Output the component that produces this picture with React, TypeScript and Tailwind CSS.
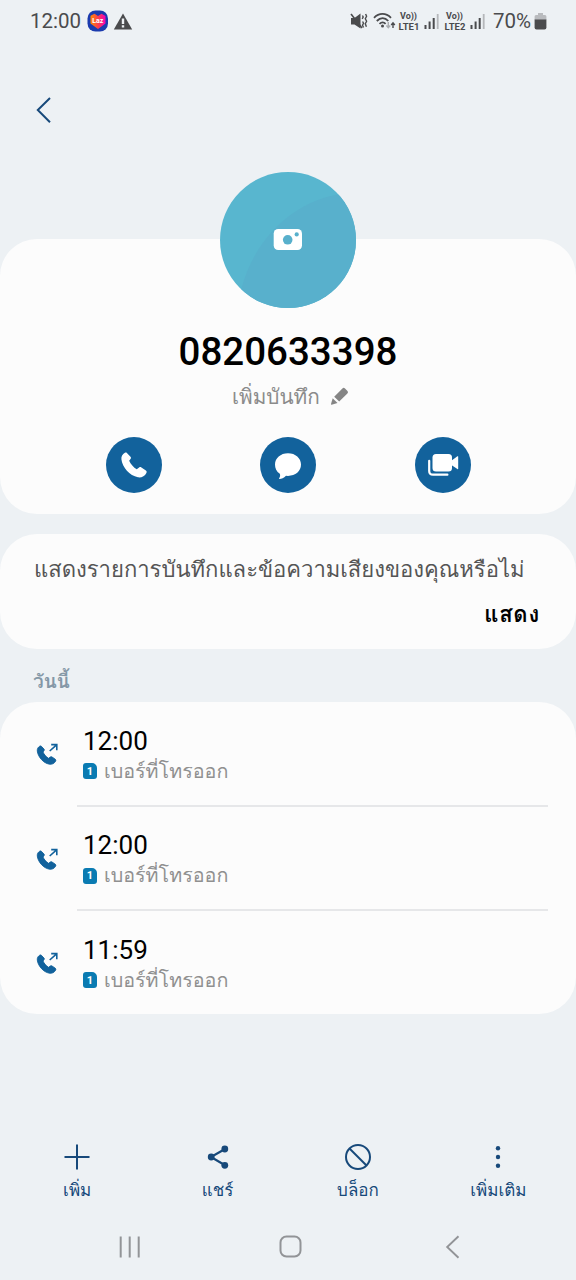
import React from 'react';

const calls = [
  { id: 1, time: '12:00', label: 'เบอร์ที่โทรออก' },
  { id: 2, time: '12:00', label: 'เบอร์ที่โทรออก' },
  { id: 3, time: '11:59', label: 'เบอร์ที่โทรออก' },
];

const PHONE_PATH =
  'M5.8 .9 L9.3 4.6 C10 5.4 9.9 6.1 9.3 6.8 L8 8.6 C9.4 11.8 12.4 15.2 15.4 17 L17.8 15.2 C18.5 14.7 19.3 14.7 20 15.2 L24.4 18.2 C25.2 18.8 25.4 19.6 24.9 20.5 C23.2 23.8 20.2 25.3 16.6 24.8 C8.6 23.5 1.2 15 .4 7.2 C.1 4.4 1.4 2 3.8 .7 C4.6 .3 5.2 .3 5.8 .9 Z';

function Signal() {
  return (
    <svg width="16" height="17" viewBox="0 0 16 17" fill="#4a4b4d">
      <rect x="0.5" y="12" width="2" height="4" />
      <rect x="4.6" y="8.5" width="2" height="7.5" />
      <rect x="8.7" y="5" width="2" height="11" />
      <rect x="12.8" y="1" width="1.8" height="15" fill="#b5b7ba" />
    </svg>
  );
}

function Lte({ sim }: { sim: string }) {
  return (
    <div className="flex w-[22px] flex-col items-center text-[9px] leading-[11px] font-bold whitespace-nowrap text-[#4a4b4d]">
      <span className="-ml-px">Vo))</span>
      <span className="-mt-px text-[9.5px]">{sim}</span>
    </div>
  );
}

function StatusBar() {
  return (
    <div className="flex h-[44px] items-center pb-[2px] pl-[30px] text-[#4a4b4d]">
      <span className="w-[52px] text-[20.5px] leading-[24px] whitespace-nowrap">12:00</span>
      <svg className="ml-[5px]" width="22" height="22" viewBox="0 0 22 22">
        <defs>
          <linearGradient id="heart" x1="0" x2="1" y1="0" y2="0">
            <stop offset="0" stopColor="#ff8a00" />
            <stop offset="0.5" stopColor="#fb3f4c" />
            <stop offset="1" stopColor="#f500b8" />
          </linearGradient>
        </defs>
        <rect x="0.5" y="0.5" width="20.5" height="21" rx="8" fill="#1b3bae" />
        <path d="M4 5.5 L7.5 3.8 L11 6 L14.5 3.8 L18.5 6 V13.5 L11 19 L3.5 13.5 V6 Z" fill="url(#heart)" />
        <text x="10.8" y="13.4" textAnchor="middle" fontSize="7" fontWeight="bold" fill="#fff" fontFamily="Roboto, sans-serif">Laz</text>
      </svg>
      <svg className="ml-[4px]" width="20" height="17" viewBox="0 0 20 17">
        <path d="M10 .5 L19.2 16.5 H.8 Z" fill="#4a4b4d" />
        <path d="M8.8 5.5 H11.2 V11 H8.8 Z M8.8 12.2 H11.2 V14.6 H8.8 Z" fill="#edf1f4" />
      </svg>
      <svg className="ml-[217px]" width="18" height="18" viewBox="0 0 18 18">
        <path d="M1 6 H4.5 L10.5 1.5 V16.5 L4.5 12.5 H1 Z" fill="#4a4b4d" />
        <path d="M1 2 L12 16" stroke="#4a4b4d" strokeWidth="1.6" />
        <path d="M12.4 3.5 l.8 1.5 -1 1.8 M15.6 2 l1 2.3 -1.3 2.5 1.3 2.5 -1.3 2.5 1.1 3 M12.6 9.5 l.9 1.7 -1 2 1 2.3" stroke="#4a4b4d" strokeWidth="1.4" fill="none" />
      </svg>
      <svg className="ml-[5px]" width="23" height="18" viewBox="0 0 23 18" fill="none">
        <path d="M1 5.8 C6 .6 13 .6 18 5.8 M3.8 9 C7.5 5.2 11.8 5.2 15.3 9 M6.5 11.9 C8.6 9.8 10.8 9.8 12.6 11.9" stroke="#4a4b4d" strokeWidth="1.8" />
        <circle cx="9.5" cy="14" r="1.5" fill="#4a4b4d" />
        <path d="M15.3 10 V15.5 M13.4 13.5 L15.3 15.7 L17.2 13.5" stroke="#aaacaf" strokeWidth="1.4" />
        <path d="M20 16 V11 M18.2 13 L20 10.8 L21.8 13" stroke="#4a4b4d" strokeWidth="1.4" />
      </svg>
      <div className="ml-[2px] flex items-center">
        <Lte sim="LTE1" />
        <div className="ml-[4px]"><Signal /></div>
        <div className="ml-[4px]"><Lte sim="LTE2" /></div>
        <div className="ml-[4px]"><Signal /></div>
      </div>
      <span className="ml-[7px] w-[39px] text-[20.5px] leading-[24px] whitespace-nowrap">70%</span>
      <svg className="ml-[2px]" width="13" height="18" viewBox="0 0 13 18">
        <path d="M4 1 H9 V3 H11 Q12.4 3 12.4 4.6 V8 H.6 V4.6 Q.6 3 2 3 H4 Z" fill="#b9bbbe" />
        <path d="M.6 7.5 H12.4 V15.5 Q12.4 17.5 10.5 17.5 H2.5 Q.6 17.5 .6 15.5 Z" fill="#4a4b4d" />
      </svg>
    </div>
  );
}

function Avatar() {
  return (
    <svg className="-mt-[67px] shrink-0" width="136" height="136" viewBox="0 0 136 136">
      <defs>
        <clipPath id="avatar">
          <circle cx="68" cy="68" r="68" />
        </clipPath>
      </defs>
      <g clipPath="url(#avatar)">
        <rect width="136" height="136" fill="#58b6cf" />
        <path d="M21 118 C34 67 73 29 121 22 H136 V136 H21 Z" fill="#58b0cc" />
      </g>
      <rect x="53.7" y="57" width="28.3" height="21" rx="4.5" fill="#fff" />
      <circle cx="67.7" cy="67.8" r="4.8" fill="#58b0cc" />
      <circle cx="76.7" cy="62.4" r="2.1" fill="#58b0cc" />
    </svg>
  );
}

function ProfileCard() {
  return (
    <section className="flex h-[274.5px] flex-col items-center rounded-[37px] bg-[#fcfcfc]">
      <Avatar />
      <h1 className="mt-[20.5px] text-[38.5px] leading-[46px] font-medium whitespace-nowrap text-black">0820633398</h1>
      <div className="mt-[8px] ml-[5px] flex h-[28px] w-[117px] items-center justify-between">
        <span className="text-[20.7px] leading-[28px] whitespace-nowrap text-[#8b8b8b]">เพิ่มบันทึก</span>
        <svg className="shrink-0" width="19" height="19" viewBox="0 0 19 19" fill="#858585">
          <path d="M4.2 9.7 L12.4 1.5 Q13.7 .2 15 1.5 L17.5 4 Q18.6 5.3 17.4 6.5 L9.2 14.6 Z" />
          <path d="M2.7 11.3 L7.5 16.1 L1.6 17.7 Q.9 17.8 1 17 Z" />
        </svg>
      </div>
      <div className="mt-[26.5px] flex w-[365px] justify-between">
        <button type="button" className="flex h-[56px] w-[56px] items-center justify-center rounded-full bg-[#12629c]">
          <svg width="26" height="26" viewBox="0 0 25.5 25.5">
            <path d={PHONE_PATH} fill="#fff" />
          </svg>
        </button>
        <button type="button" className="flex h-[56px] w-[56px] items-center justify-center rounded-full bg-[#12629c]">
          <svg width="28" height="28" viewBox="0 0 28 28">
            <path d="M14 2.3 C21.5 2.3 27 7.2 27 13.6 C27 20.2 21.5 24.9 14 24.9 L12 24.8 C9.8 27 7.5 27.9 5.5 28 C5 28 4.9 27.6 5.2 27.2 C6.2 25.8 6.4 24.3 5.8 22.8 C2.5 20.7 1 17.2 1 13.6 C1 7.2 6.5 2.3 14 2.3 Z" fill="#fff" />
          </svg>
        </button>
        <button type="button" className="flex h-[56px] w-[56px] items-center justify-center rounded-full bg-[#12629c]">
          <svg width="32" height="24" viewBox="0 0 32 24">
            <rect x="5.5" y="1" width="19.5" height="17.5" rx="3.5" fill="#fff" />
            <path d="M24 8 L30.4 3.3 Q31.2 2.9 31.2 3.8 V15.6 Q31.2 16.5 30.4 16 L24 11.8 Z" fill="#fff" />
            <path d="M2.2 7.8 V18 Q2.2 21.7 6 21.7 H20.4" fill="none" stroke="#fff" strokeWidth="2.2" strokeLinecap="round" />
          </svg>
        </button>
      </div>
    </section>
  );
}

function CallRow({ time, label, last }: { time: string; label: string; last: boolean }) {
  return (
    <div className="flex h-[104.5px] pl-[36px]">
      <svg className="mt-[40px] shrink-0" width="23" height="24" viewBox="0 0 23 24">
        <g transform="translate(1 3.6) scale(.75)">
          <path d={PHONE_PATH} fill="#12629c" stroke="#12629c" strokeWidth="1.2" />
        </g>
        <path d="M13.7 9 L20.6 2.8 M15.2 2.6 H20.8 V8.2" stroke="#12629c" strokeWidth="1.6" fill="none" />
      </svg>
      <div className={`ml-[18px] w-[471px] pl-[6px] ${last ? '' : 'border-b-2 border-[#e6e7e9]'}`}>
        <div className="mt-[22.5px] text-[26px] leading-[32px] text-black">{time}</div>
        <div className="mt-[2px] flex h-[26px] items-center">
          <span className="-mt-px flex h-[16px] w-[14px] items-center justify-center rounded-[3px] rounded-tr-[5px] bg-[#0a7bb2] text-[11px] leading-none font-bold text-white">1</span>
          <span className="ml-[7px] text-[19.7px] leading-[26px] whitespace-nowrap text-[#909090]">{label}</span>
        </div>
      </div>
    </div>
  );
}

function Action({ label, children }: { label: string; children: React.ReactNode }) {
  return (
    <button type="button" className="flex w-[140.4px] flex-col items-center text-[#17497a]">
      <span className="flex h-[28px] items-center justify-center">{children}</span>
      <span className="mt-[5.5px] text-[17px] leading-[26px] whitespace-nowrap">{label}</span>
    </button>
  );
}

export default function App() {
  return (
    <div className="flex h-[1280px] w-[576px] flex-col overflow-hidden bg-[#edf1f4] font-[Roboto,Loma,sans-serif]">
      <StatusBar />
      <header className="h-[195px] pt-[53px] pl-[36px]">
        <svg width="16" height="27" viewBox="0 0 16 27">
          <path d="M14 1 L1.8 13 L14 25.3" fill="none" stroke="#17497a" strokeWidth="2" />
        </svg>
      </header>
      <ProfileCard />
      <section className="mt-[20.5px] h-[114.5px] rounded-[37px] bg-[#fcfcfc] px-[34px] pt-[20.5px]">
        <p className="text-[22.05px] leading-[30px] whitespace-nowrap text-[#555]">แสดงรายการบันทึกและข้อความเสียงของคุณหรือไม่</p>
        <div className="mt-[15.5px] flex justify-end pr-[2px]">
          <button type="button" className="text-[22px] leading-[30px] font-bold tracking-[.8px] whitespace-nowrap text-black">แสดง</button>
        </div>
      </section>
      <h2 className="mt-[19px] h-[34.5px] pl-[33px] text-[19px] leading-[28px] font-bold text-[#8497a6]">วันนี้</h2>
      <section className="h-[312px] shrink-0 overflow-hidden rounded-[37px] bg-[#fcfcfc]">
        {calls.map((c, i) => (
          <CallRow key={c.id} time={c.time} label={c.label} last={i === calls.length - 1} />
        ))}
      </section>
      <div className="mt-[129px] flex pl-[7px]">
        <Action label="เพิ่ม">
          <svg width="26" height="26" viewBox="0 0 26 26">
            <path d="M13 .5 V25.5 M.5 13 H25.5" stroke="currentColor" strokeWidth="2" />
          </svg>
        </Action>
        <Action label="แชร์">
          <svg width="22" height="24" viewBox="0 0 22 24">
            <path d="M18 4 L4 12 L18 20.3" fill="none" stroke="currentColor" strokeWidth="2.2" />
            <circle cx="17.8" cy="4" r="3.4" fill="currentColor" />
            <circle cx="4.2" cy="12" r="3.4" fill="currentColor" />
            <circle cx="17.8" cy="20.3" r="3.4" fill="currentColor" />
          </svg>
        </Action>
        <Action label="บล็อก">
          <svg width="26" height="26" viewBox="0 0 26 26" fill="none" stroke="currentColor" strokeWidth="2">
            <circle cx="13" cy="13" r="12" />
            <path d="M4.5 4.5 L21.5 21.5" />
          </svg>
        </Action>
        <Action label="เพิ่มเติม">
          <svg width="6" height="24" viewBox="0 0 6 24" fill="currentColor">
            <circle cx="3" cy="3.3" r="2.2" />
            <circle cx="3" cy="12" r="2.2" />
            <circle cx="3" cy="20.7" r="2.2" />
          </svg>
        </Action>
      </div>
      <nav className="mt-[31px] flex h-[26px] items-center pl-[119px]">
        <svg width="22" height="22" viewBox="0 0 22 22">
          <path d="M1.7 .5 V21.5 M10.7 .5 V21.5 M19.7 .5 V21.5" stroke="#929497" strokeWidth="2" />
        </svg>
        <svg className="ml-[138px]" width="23" height="23" viewBox="0 0 23 23">
          <rect x="1.5" y="1.5" width="20" height="20" rx="6" fill="none" stroke="#929497" strokeWidth="2" />
        </svg>
        <svg className="ml-[143px]" width="16" height="24" viewBox="0 0 16 24">
          <path d="M13.5 1.3 L2.2 12 L13.5 22.7" fill="none" stroke="#929497" strokeWidth="1.9" />
        </svg>
      </nav>
    </div>
  );
}
